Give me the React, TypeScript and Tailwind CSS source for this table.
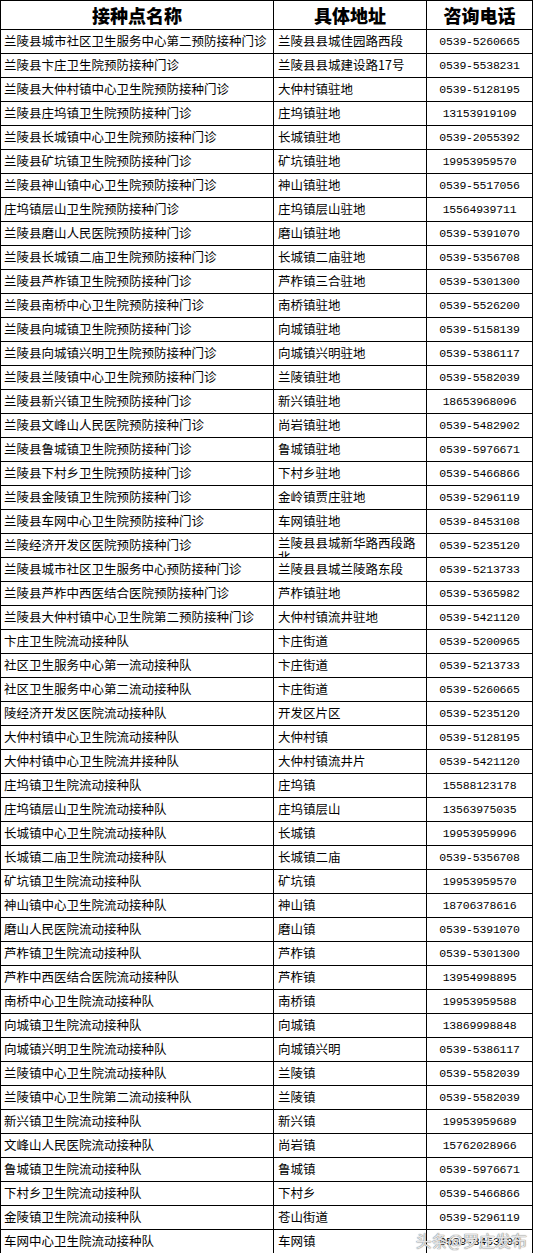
import React from "react";

const rows: [string, string, string][] = [
  ["兰陵县城市社区卫生服务中心第二预防接种门诊", "兰陵县县城佳园路西段", "0539-5260665"],
  ["兰陵县卞庄卫生院预防接种门诊", "兰陵县县城建设路17号", "0539-5538231"],
  ["兰陵县大仲村镇中心卫生院预防接种门诊", "大仲村镇驻地", "0539-5128195"],
  ["兰陵县庄坞镇卫生院预防接种门诊", "庄坞镇驻地", "13153919109"],
  ["兰陵县长城镇中心卫生院预防接种门诊", "长城镇驻地", "0539-2055392"],
  ["兰陵县矿坑镇卫生院预防接种门诊", "矿坑镇驻地", "19953959570"],
  ["兰陵县神山镇中心卫生院预防接种门诊", "神山镇驻地", "0539-5517056"],
  ["庄坞镇层山卫生院预防接种门诊", "庄坞镇层山驻地", "15564939711"],
  ["兰陵县磨山人民医院预防接种门诊", "磨山镇驻地", "0539-5391070"],
  ["兰陵县长城镇二庙卫生院预防接种门诊", "长城镇二庙驻地", "0539-5356708"],
  ["兰陵县芦柞镇卫生院预防接种门诊", "芦柞镇三合驻地", "0539-5301300"],
  ["兰陵县南桥中心卫生院预防接种门诊", "南桥镇驻地", "0539-5526200"],
  ["兰陵县向城镇卫生院预防接种门诊", "向城镇驻地", "0539-5158139"],
  ["兰陵县向城镇兴明卫生院预防接种门诊", "向城镇兴明驻地", "0539-5386117"],
  ["兰陵县兰陵镇中心卫生院预防接种门诊", "兰陵镇驻地", "0539-5582039"],
  ["兰陵县新兴镇卫生院预防接种门诊", "新兴镇驻地", "18653968096"],
  ["兰陵县文峰山人民医院预防接种门诊", "尚岩镇驻地", "0539-5482902"],
  ["兰陵县鲁城镇卫生院预防接种门诊", "鲁城镇驻地", "0539-5976671"],
  ["兰陵县下村乡卫生院预防接种门诊", "下村乡驻地", "0539-5466866"],
  ["兰陵县金陵镇卫生院预防接种门诊", "金岭镇贾庄驻地", "0539-5296119"],
  ["兰陵县车网中心卫生院预防接种门诊", "车网镇驻地", "0539-8453108"],
  ["兰陵经济开发区医院预防接种门诊", "兰陵县县城新华路西段路北", "0539-5235120"],
  ["兰陵县城市社区卫生服务中心预防接种门诊", "兰陵县县城兰陵路东段", "0539-5213733"],
  ["兰陵县芦柞中西医结合医院预防接种门诊", "芦柞镇驻地", "0539-5365982"],
  ["兰陵县大仲村镇中心卫生院第二预防接种门诊", "大仲村镇流井驻地", "0539-5421120"],
  ["卞庄卫生院流动接种队", "卞庄街道", "0539-5200965"],
  ["社区卫生服务中心第一流动接种队", "卞庄街道", "0539-5213733"],
  ["社区卫生服务中心第二流动接种队", "卞庄街道", "0539-5260665"],
  ["陵经济开发区医院流动接种队", "开发区片区", "0539-5235120"],
  ["大仲村镇中心卫生院流动接种队", "大仲村镇", "0539-5128195"],
  ["大仲村镇中心卫生院流井接种队", "大仲村镇流井片", "0539-5421120"],
  ["庄坞镇卫生院流动接种队", "庄坞镇", "15588123178"],
  ["庄坞镇层山卫生院流动接种队", "庄坞镇层山", "13563975035"],
  ["长城镇中心卫生院流动接种队", "长城镇", "19953959996"],
  ["长城镇二庙卫生院流动接种队", "长城镇二庙", "0539-5356708"],
  ["矿坑镇卫生院流动接种队", "矿坑镇", "19953959570"],
  ["神山镇中心卫生院流动接种队", "神山镇", "18706378616"],
  ["磨山人民医院流动接种队", "磨山镇", "0539-5391070"],
  ["芦柞镇卫生院流动接种队", "芦柞镇", "0539-5301300"],
  ["芦柞中西医结合医院流动接种队", "芦柞镇", "13954998895"],
  ["南桥中心卫生院流动接种队", "南桥镇", "19953959588"],
  ["向城镇卫生院流动接种队", "向城镇", "13869998848"],
  ["向城镇兴明卫生院流动接种队", "向城镇兴明", "0539-5386117"],
  ["兰陵镇中心卫生院流动接种队", "兰陵镇", "0539-5582039"],
  ["兰陵镇中心卫生院第二流动接种队", "兰陵镇", "0539-5582039"],
  ["新兴镇卫生院流动接种队", "新兴镇", "19953959689"],
  ["文峰山人民医院流动接种队", "尚岩镇", "15762028966"],
  ["鲁城镇卫生院流动接种队", "鲁城镇", "0539-5976671"],
  ["下村乡卫生院流动接种队", "下村乡", "0539-5466866"],
  ["金陵镇卫生院流动接种队", "苍山街道", "0539-5296119"],
  ["车网中心卫生院流动接种队", "车网镇", "0539-8453108"],
];

const cjk = "font-['Noto_Sans_CJK_SC',sans-serif]";

export default function App() {
  return (
    <div className="relative w-[533px] h-[1253px] overflow-hidden bg-white text-black">
      <div className="border-l border-t border-black w-[533px]">
        <div className={`grid grid-cols-[273px_153px_106px] h-[29px] border-b border-black ${cjk} font-black text-[18px] leading-none`}>
          <div className="border-r border-black flex items-center justify-center">接种点名称</div>
          <div className="border-r border-black flex items-center justify-center">具体地址</div>
          <div className="border-r border-black flex items-center justify-center">咨询电话</div>
        </div>
        {rows.map(([name, addr, tel], i) => {
          const wrap = addr.length > 11;
          return (
            <div key={i} className="grid grid-cols-[273px_153px_106px] h-[24px] border-b border-black">
              <div className={`border-r border-black flex items-center pl-[3px] ${cjk} text-[12.5px] leading-none whitespace-nowrap overflow-hidden`}>
                {name}
              </div>
              {wrap ? (
                <div className={`border-r border-black pl-[4px] pt-[2px] ${cjk} text-[12.5px] leading-[14px] overflow-hidden`}>
                  <div className="whitespace-nowrap">{addr.slice(0, 11)}</div>
                  <div className="whitespace-nowrap">{addr.slice(11)}</div>
                </div>
              ) : (
                <div className={`border-r border-black flex items-center pl-[4px] ${cjk} text-[12.5px] leading-none whitespace-nowrap overflow-hidden`}>
                  {addr}
                </div>
              )}
              <div className="border-r border-black flex items-center justify-center font-['Liberation_Mono',monospace] text-[11.5px] leading-none tracking-[-0.2px]">
                {tel}
              </div>
            </div>
          );
        })}
      </div>
      <div className={`absolute right-[6px] bottom-[1px] ${cjk} text-[16px] text-white/80 [text-shadow:0_0_1px_#777,0_0_1px_#777]`}>
        头条@罗庄发布
      </div>
    </div>
  );
}
